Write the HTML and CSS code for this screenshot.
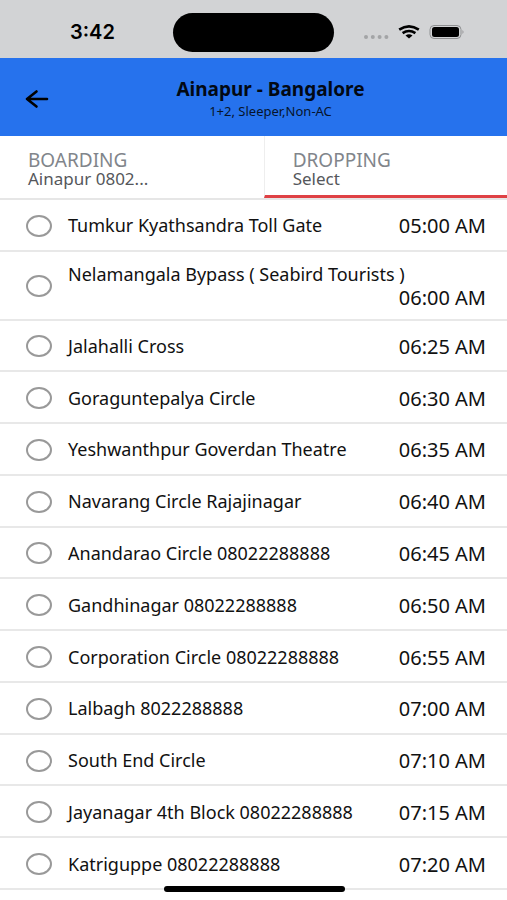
FILE: index.html
```html
<!DOCTYPE html>
<html lang="en">
<head>
<meta charset="utf-8">
<meta name="viewport" content="width=device-width, initial-scale=1">
<title>Ainapur - Bangalore</title>
<link rel="stylesheet" href="styles.css">
</head>
<body>
<div class="status">
  <span class="clock">3:42</span>
  <span class="island"></span>
  <span class="indicators">
    <svg width="26" height="24" viewBox="0 0 26 24" fill="#a3a4a6" aria-hidden="true"><circle cx="3" cy="16" r="2"/><circle cx="9.800" cy="16" r="2"/><circle cx="16.600" cy="16" r="2"/><circle cx="23.400" cy="16" r="2"/></svg>
    <svg width="22" height="24" viewBox="0 0 22 24" fill="none" stroke="#000" stroke-width="2.600" aria-hidden="true"><path d="M1.200 8.700Q11 2.100 20.800 8.700"/><path d="M4.600 12.100Q11 7.800 17.400 12.100"/><path d="M7.500 14.500Q11 12.100 14.500 14.500L11 17.500Z" fill="#000" stroke="none"/></svg>
    <svg width="36" height="24" viewBox="0 0 36 24" aria-hidden="true"><rect x="1" y="4.500" width="31" height="13" rx="4" fill="none" stroke="#8f9092"/><rect x="3" y="6" width="27" height="10" rx="2.500"/><path d="M33.500 9Q35.500 11 33.500 13Z" fill="#8f9092"/></svg>
  </span>
</div>
<header class="bar">
  <button class="back" type="button" aria-label="Back">
    <svg width="24" height="20" viewBox="0 0 24 20" fill="none" stroke="#000" stroke-width="2.600" stroke-linecap="round" stroke-linejoin="round" aria-hidden="true"><path d="M22 10H2M11.500 2.500L2 10L11.500 17.500"/></svg>
  </button>
  <div class="heading">
    <h1>Ainapur - Bangalore</h1>
    <p>1+2, Sleeper,Non-AC</p>
  </div>
</header>
<nav class="tabs">
  <button class="tab" type="button"><span class="kind">BOARDING</span><span class="choice">Ainapur 0802...</span></button>
  <button class="tab active" type="button"><span class="kind">DROPPING</span><span class="choice">Select</span></button>
</nav>
<main class="stops">
  <label class="stop"><input type="radio" name="stop"><span class="info"><span class="name">Tumkur Kyathsandra Toll Gate</span><span class="time">05:00 AM</span></span></label>
  <label class="stop"><input type="radio" name="stop"><span class="info"><span class="name">Nelamangala Bypass ( Seabird Tourists )</span><span class="time">06:00 AM</span></span></label>
  <label class="stop"><input type="radio" name="stop"><span class="info"><span class="name">Jalahalli Cross</span><span class="time">06:25 AM</span></span></label>
  <label class="stop"><input type="radio" name="stop"><span class="info"><span class="name">Goraguntepalya Circle</span><span class="time">06:30 AM</span></span></label>
  <label class="stop"><input type="radio" name="stop"><span class="info"><span class="name">Yeshwanthpur Goverdan Theatre</span><span class="time">06:35 AM</span></span></label>
  <label class="stop"><input type="radio" name="stop"><span class="info"><span class="name">Navarang Circle Rajajinagar</span><span class="time">06:40 AM</span></span></label>
  <label class="stop"><input type="radio" name="stop"><span class="info"><span class="name">Anandarao Circle 08022288888</span><span class="time">06:45 AM</span></span></label>
  <label class="stop"><input type="radio" name="stop"><span class="info"><span class="name">Gandhinagar 08022288888</span><span class="time">06:50 AM</span></span></label>
  <label class="stop"><input type="radio" name="stop"><span class="info"><span class="name">Corporation Circle 08022288888</span><span class="time">06:55 AM</span></span></label>
  <label class="stop"><input type="radio" name="stop"><span class="info"><span class="name">Lalbagh 8022288888</span><span class="time">07:00 AM</span></span></label>
  <label class="stop"><input type="radio" name="stop"><span class="info"><span class="name">South End Circle</span><span class="time">07:10 AM</span></span></label>
  <label class="stop"><input type="radio" name="stop"><span class="info"><span class="name">Jayanagar 4th Block 08022288888</span><span class="time">07:15 AM</span></span></label>
  <label class="stop"><input type="radio" name="stop"><span class="info"><span class="name">Katriguppe 08022288888</span><span class="time">07:20 AM</span></span></label>
</main>
<div class="home"></div>
</body>
</html>
```
FILE: styles.css
```css
* {
  box-sizing: border-box;
}

body {
  margin: 0;
  min-height: 100vh;
  display: flex;
  flex-direction: column;
  padding-bottom: 10px;
  background: #fff;
  color: #111;
  font-family: "Noto Sans", "Open Sans", sans-serif;
}

button {
  border: 0;
  padding: 0;
  background: none;
  color: inherit;
  font: inherit;
}

.status {
  display: grid;
  grid-template-columns: 1fr auto 1fr;
  align-items: center;
  padding: 13px 42px 6px;
  background: #d2d3d5;
}

.clock {
  padding-left: 28px;
  padding-bottom: 2px;
  color: #000;
  font: 600 20px/24px Inter, sans-serif;
}

.island {
  width: 161px;
  height: 39px;
  border-radius: 20px;
  background: #000;
}

.indicators {
  display: flex;
  justify-content: flex-end;
  gap: 9px;
}

.bar {
  display: grid;
  grid-template-columns: 1fr auto 1fr;
  align-items: center;
  padding: 16px 25px;
  background: #2672ed;
  color: #06142b;
}

.back {
  display: flex;
  justify-self: start;
  padding-top: 4px;
}

.heading {
  padding-left: 34px;
  padding-top: 1px;
  text-align: center;
}

.heading h1 {
  margin: 0;
  color: #020914;
  font-size: 19px;
  line-height: 28px;
}

.heading p {
  margin: 0;
  font-size: 13px;
  line-height: 17px;
}

.tabs {
  display: grid;
  grid-template-columns: 52fr 48fr;
  border-bottom: 2px solid #e6e6e6;
}

.tab {
  display: flex;
  flex-direction: column;
  padding: 14px 27px 7px 28px;
  border-bottom: 3px solid transparent;
  text-align: left;
}

.tab.active {
  border-left: 1px solid #eee;
  border-bottom-color: #df4145;
}

.kind {
  color: #81858b;
  font-size: 19px;
  line-height: 20px;
}

.choice {
  color: #55575b;
  font-size: 17px;
  line-height: 18px;
}

.stops {
  flex: 1;
  display: flex;
  flex-direction: column;
}

.stop {
  flex: 1 0 auto;
  display: flex;
  align-items: center;
  gap: 16px;
  padding: 11px 21px 9px 26px;
  border-bottom: 2px solid #e8e8e8;
}

.stop input {
  appearance: none;
  flex: none;
  width: 26px;
  height: 22px;
  margin: 0;
  border: 2px solid #999;
  border-radius: 50%;
}

.stop input:checked {
  background: #2672ed;
}

.info {
  flex: 1;
  display: flex;
  flex-wrap: wrap;
  align-items: center;
  align-content: center;
  column-gap: 24px;
  min-height: 29px;
  line-height: 23px;
}

.name {
  font-size: 18px;
}

.time {
  margin-left: auto;
  font-size: 20px;
}

.home {
  position: fixed;
  bottom: 8px;
  left: 50%;
  width: 181px;
  height: 6px;
  margin-left: -90px;
  border-radius: 3px;
  background: #000;
}
```
